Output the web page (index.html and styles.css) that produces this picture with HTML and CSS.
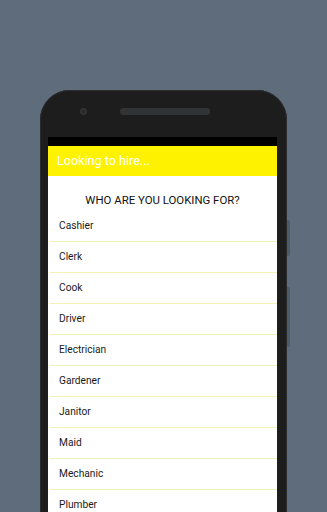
FILE: index.html
```html
<!DOCTYPE html>
<html>
<head>
<meta charset="utf-8">
<link rel="stylesheet" href="styles.css">
</head>
<body>
<div class="stage">
  <div class="phone">
    <div class="btn btn-1"></div>
    <div class="btn btn-2"></div>
    <div class="bezel">
      <span class="camera"></span>
      <span class="speaker"></span>
    </div>
    <div class="screen">
      <div class="status"></div>
      <div class="appbar">Looking to hire...</div>
      <div class="content">
        <div class="title">WHO ARE YOU LOOKING FOR?</div>
        <ul class="list">
          <li>Cashier</li>
          <li>Clerk</li>
          <li>Cook</li>
          <li>Driver</li>
          <li>Electrician</li>
          <li>Gardener</li>
          <li>Janitor</li>
          <li>Maid</li>
          <li>Mechanic</li>
          <li>Plumber</li>
        </ul>
      </div>
    </div>
  </div>
</div>
</body>
</html>
```
FILE: styles.css
```css
html, body {
  margin: 0;
  padding: 0;
  height: 512px;
  overflow: hidden;
}
body {
  background: #5f6c7b;
  font-family: Roboto, "Noto Sans", sans-serif;
}
.stage {
  padding-top: 90px;
  padding-left: 40px;
}
.phone {
  position: relative;
  width: 247px;
  height: 422px;
  background: #1d1d1e;
  border-radius: 30px 30px 0 0;
  box-shadow: inset 0 1px 0 #2c2d2f, inset 1px 0 0 #2a2b2d, inset -1px 0 0 #2a2b2d;
}
.btn {
  position: absolute;
  right: -3px;
  width: 3px;
  background: #4f5a67;
  border-radius: 0 2px 2px 0;
}
.btn-1 { top: 130px; height: 36px; }
.btn-2 { top: 197px; height: 60px; }
.bezel {
  height: 47px;
  display: flex;
  align-items: center;
  padding-left: 40px;
  box-sizing: border-box;
  padding-bottom: 4px;
}
.camera {
  width: 7px;
  height: 7px;
  border-radius: 50%;
  background: #2a2b2d;
  border: 1px solid #3a3b3e;
  box-sizing: border-box;
}
.speaker {
  margin-left: 33px;
  width: 90px;
  height: 7px;
  border-radius: 3px;
  background: #323335;
}
.screen {
  margin: 0 10px 0 8px;
  background: #fff;
  height: 375px;
  overflow: hidden;
}
.status {
  height: 9px;
  background: #000;
}
.appbar {
  height: 30px;
  background: #fff200;
  color: #fff;
  font-size: 12.6px;
  line-height: 30px;
  padding-left: 9px;
}
.content {
  background: #fff;
}
.title {
  text-align: center;
  font-size: 11.4px;
  color: #111;
  padding-top: 17px;
  line-height: 14px;
  height: 18px;
}
.list {
  list-style: none;
  margin: 0;
  padding: 0;
}
.list li {
  height: 30px;
  line-height: 30px;
  font-size: 10.2px;
  color: #1a1a1a;
  padding-left: 9px;
  border-bottom: 1px solid #f0f0b8;
  margin-left: 2px;
}
```
